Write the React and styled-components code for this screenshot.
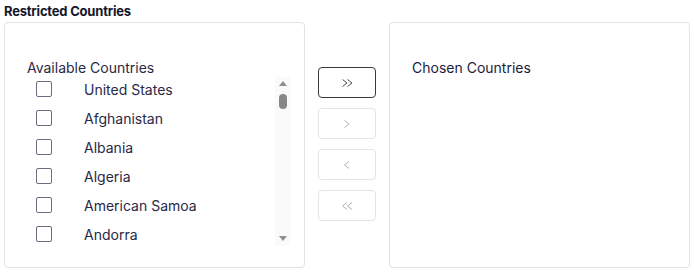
import styled, { createGlobalStyle } from "styled-components";

const GlobalStyle = createGlobalStyle`
  html, body {
    margin: 0;
    padding: 0;
    background: #ffffff;
    font-family: "Inter", "Liberation Sans", sans-serif;
  }
`;

const countries = [
  "United States", "Afghanistan", "Albania", "Algeria", "American Samoa",
  "Andorra", "Angola", "Anguilla", "Antarctica", "Antigua and Barbuda",
  "Argentina", "Armenia", "Aruba", "Australia", "Austria", "Azerbaijan",
  "Bahamas", "Bahrain", "Bangladesh", "Barbados", "Belarus", "Belgium",
  "Belize", "Benin", "Bermuda", "Bhutan", "Bolivia", "Bosnia and Herzegovina",
  "Botswana", "Brazil", "Brunei", "Bulgaria", "Burkina Faso", "Burundi",
  "Cambodia", "Cameroon", "Canada", "Cape Verde", "Cayman Islands", "Chad",
  "Chile", "China", "Colombia", "Comoros", "Congo", "Costa Rica", "Croatia",
  "Cuba", "Cyprus", "Czech Republic", "Denmark", "Djibouti", "Dominica",
  "Ecuador", "Egypt", "El Salvador", "Estonia", "Ethiopia", "Fiji", "Finland",
];

const Page = styled.div`
  padding: 4px 4px 0 4px;
`;

const Title = styled.div`
  font-size: 13px;
  font-weight: 700;
  color: #16162a;
  line-height: 14px;
  height: 18px;
  letter-spacing: -0.2px;
`;

const Layout = styled.div`
  display: grid;
  grid-template-columns: 1fr 84px 1fr;
  height: 246px;
`;

const Panel = styled.div`
  border: 1px solid #e2e2e6;
  border-radius: 4px;
  padding: 36px 14px 21px 22px;
  display: flex;
  flex-direction: column;
  min-height: 0;
`;

const PanelLabel = styled.div`
  font-size: 14px;
  line-height: 17px;
  color: ${(p) => p.color || "#2a2845"};
`;

const ListFrame = styled.div`
  flex: 1;
  min-height: 0;
  display: flex;
  margin-top: -1px;
`;

const List = styled.div`
  flex: 1;
  min-height: 0;
  overflow-y: auto;
  scrollbar-width: none;
  &::-webkit-scrollbar {
    display: none;
  }
`;

const Row = styled.label`
  display: flex;
  align-items: center;
  height: 29px;
  padding-left: 9px;
  font-size: 14px;
  line-height: 17px;
  color: #2a2845;
  cursor: pointer;
  & > span:last-child {
    margin-top: 0;
  }
`;

const Box = styled.span`
  width: 16px;
  height: 16px;
  border: 1px solid #6e6a82;
  border-radius: 2px;
  box-sizing: border-box;
  margin-right: 32px;
  margin-top: -2px;
  flex-shrink: 0;
`;

const Track = styled.div`
  width: 15px;
  margin-top: 2px;
  background: #fafafa;
  display: flex;
  flex-direction: column;
  align-items: center;
`;

const Arrow = styled.div`
  width: 0;
  height: 0;
  border-left: 4.5px solid transparent;
  border-right: 4.5px solid transparent;
  ${(p) =>
    p.down
      ? "border-top: 5px solid #8f8f8f; margin-top: auto; margin-bottom: 5px;"
      : "border-bottom: 5px solid #8f8f8f; margin-top: 4px;"}
`;

const Thumb = styled.div`
  width: 8px;
  height: 15px;
  border-radius: 4px;
  background: #878787;
  margin-top: 8px;
`;

const Middle = styled.div`
  display: flex;
  flex-direction: column;
  align-items: center;
  gap: 10px;
  padding-top: 45px;
`;

const MoveButton = styled.button`
  width: 58px;
  height: 31px;
  background: #ffffff;
  border: 1px solid ${(p) => (p.active ? "#3a3a3a" : "#e4e4e8")};
  border-radius: 4px;
  color: ${(p) => (p.active ? "#3a3a3a" : "#a8a8ae")};
  padding: 0;
  display: flex;
  align-items: center;
  justify-content: center;
  cursor: pointer;
`;

const Chevrons = ({ dir = 1, double }) => {
  const w = double ? 11 : 6;
  const pts = (x) =>
    dir > 0
      ? `${x},0.5 ${x + 4.5},4 ${x},7.5`
      : `${x + 4.5},0.5 ${x},4 ${x + 4.5},7.5`;
  return (
    <svg width={w} height="8" viewBox={`0 0 ${w} 8`} fill="none" stroke="currentColor" strokeWidth="0.9">
      <polyline points={pts(0.5)} />
      {double && <polyline points={pts(5.5)} />}
    </svg>
  );
};

export default function App() {
  return (
    <Page>
      <GlobalStyle />
      <Title>Restricted Countries</Title>
      <Layout>
        <Panel>
          <PanelLabel>Available Countries</PanelLabel>
          <ListFrame>
            <List>
              {countries.map((c) => (
                <Row key={c}>
                  <Box />
                  <span>{c}</span>
                </Row>
              ))}
            </List>
            <Track>
              <Arrow />
              <Thumb />
              <Arrow down />
            </Track>
          </ListFrame>
        </Panel>
        <Middle>
          <MoveButton active>
            <Chevrons double />
          </MoveButton>
          <MoveButton>
            <Chevrons />
          </MoveButton>
          <MoveButton>
            <Chevrons dir={-1} />
          </MoveButton>
          <MoveButton>
            <Chevrons dir={-1} double />
          </MoveButton>
        </Middle>
        <Panel>
          <PanelLabel color="#1b1b3a">Chosen Countries</PanelLabel>
        </Panel>
      </Layout>
    </Page>
  );
}
